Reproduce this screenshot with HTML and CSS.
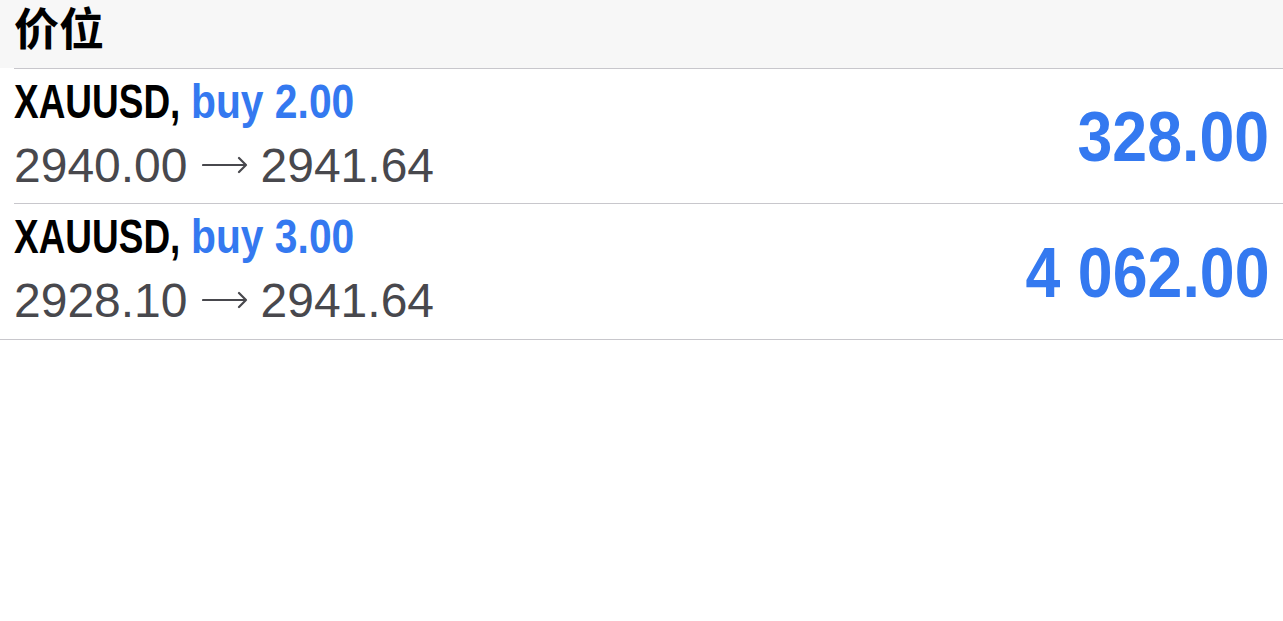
FILE: index.html
```html
<!DOCTYPE html>
<html lang="zh">
<head>
<meta charset="utf-8">
<link rel="stylesheet" href="styles.css">
</head>
<body>
<div class="header"><span class="title">价位</span></div>
<div class="list">
  <div class="row">
    <div class="info">
      <div class="line1"><span class="sym">XAUUSD,</span><span class="side">buy 2.00</span></div>
      <div class="line2"><span>2940.00</span><svg class="arrow" width="46" height="18" viewBox="0 0 46 18"><path d="M1 9H44M37 2L44 9L37 16" fill="none" stroke="#48484d" stroke-width="2.2" stroke-linecap="round" stroke-linejoin="round"/></svg><span>2941.64</span></div>
    </div>
    <div class="profit">328.00</div>
  </div>
  <div class="row">
    <div class="info">
      <div class="line1"><span class="sym">XAUUSD,</span><span class="side">buy 3.00</span></div>
      <div class="line2"><span>2928.10</span><svg class="arrow" width="46" height="18" viewBox="0 0 46 18"><path d="M1 9H44M37 2L44 9L37 16" fill="none" stroke="#48484d" stroke-width="2.2" stroke-linecap="round" stroke-linejoin="round"/></svg><span>2941.64</span></div>
    </div>
    <div class="profit">4 062.00</div>
  </div>
</div>
</body>
</html>
```
FILE: styles.css
```css
html, body {
  margin: 0;
  padding: 0;
  background: #ffffff;
}
body {
  font-family: "Liberation Sans", Arial, "Noto Sans CJK SC", sans-serif;
  width: 1283px;
}
.header {
  display: flex;
  align-items: flex-start;
  height: 68px;
  background: #f7f7f7;
  padding-left: 14px;
  box-sizing: border-box;
}
.title {
  display: block;
  font-family: "Noto Sans CJK SC", sans-serif;
  font-weight: 700;
  font-size: 45px;
  line-height: 66px;
  margin-top: -6px;
  color: #000;
}
.list {
  border-bottom: 1px solid #c8c7cc;
}
.row {
  margin-left: 14px;
  padding-right: 14px;
  border-top: 1px solid #c8c7cc;
  height: 134px;
  display: flex;
  align-items: center;
  justify-content: space-between;
}
.row + .row {
  height: 135px;
}
.info {
  align-self: flex-start;
  padding-top: 1px;
}
.line1 {
  display: flex;
  font-weight: 700;
  font-size: 48px;
  line-height: 64px;
  white-space: nowrap;
}
.sym {
  display: inline-block;
  color: #000;
  transform: scaleX(0.77);
  transform-origin: left center;
  margin-right: -39px;
}
.side {
  display: inline-block;
  color: #3479f0;
  transform: scaleX(0.85);
  transform-origin: left center;
}
.line2 {
  display: flex;
  align-items: center;
  font-size: 48px;
  line-height: 64px;
  color: #48484d;
  white-space: nowrap;
}
.arrow {
  flex: none;
  margin: 0 13px 3px 14px;
}
.profit {
  font-weight: 700;
  font-size: 70px;
  color: #3479f0;
  white-space: nowrap;
  transform: scaleX(0.895);
  transform-origin: right center;
  padding-top: 2px;
}
```
